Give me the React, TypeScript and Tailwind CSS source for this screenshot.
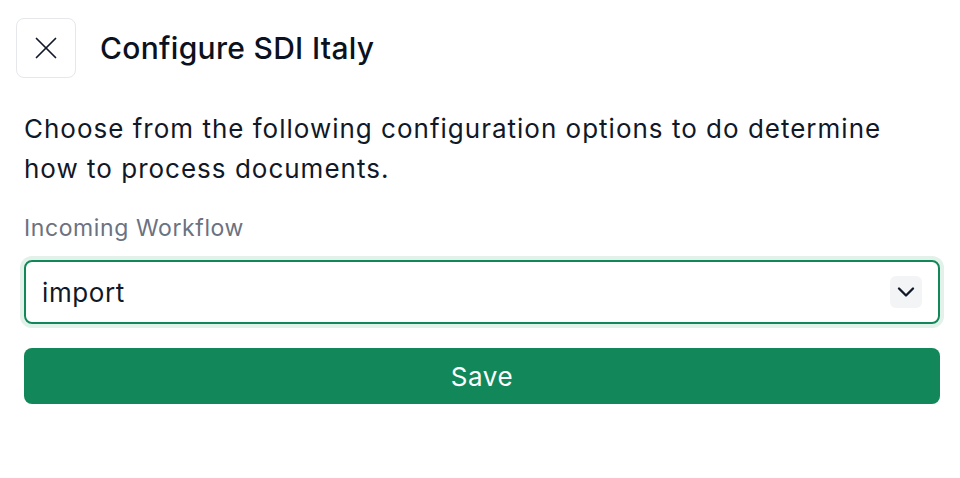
import { X, ChevronDown } from 'lucide-react';

export default function App() {
  return (
    <div className="w-[960px] h-[478px] bg-white font-['Inter',sans-serif] text-[#0f172a]">
      <div className="flex items-center gap-6 pl-4 pt-[18px]">
        <button
          type="button"
          className="flex items-center justify-center w-[60px] h-[60px] rounded-lg border border-[#e5e7eb] bg-white"
        >
          <X className="w-[38px] h-[38px] text-[#111827]" strokeWidth={1.1} />
        </button>
        <h1 className="text-[30px] leading-none font-medium tracking-[0.3px] text-[#0b1120]">Configure SDI Italy</h1>
      </div>

      <div className="pl-6 pr-5 pt-[31px]">
        <p className="text-[26px] leading-[40px] tracking-[1px] text-[#111827]">
          Choose from the following configuration options to do determine how to process documents.
        </p>

        <label className="block mt-[23px] text-[23px] leading-8 tracking-[0.6px] text-[#6b7280]">Incoming Workflow</label>

        <div className="mt-4 flex items-center h-[64px] rounded-lg border-2 border-[#12885a] ring-4 ring-[#e2f1e9] pl-4 pr-4">
          <span className="flex-1 text-[26px] tracking-[0.6px] text-[#111827]">import</span>
          <span className="flex items-center justify-center w-8 h-8 rounded-md bg-[#f3f4f6]">
            <ChevronDown className="w-7 h-7 text-[#111827]" strokeWidth={2} />
          </span>
        </div>

        <button
          type="button"
          className="mt-6 w-full h-[56px] rounded-lg bg-[#12885a] text-white text-[26px] tracking-[0.6px]"
        >
          Save
        </button>
      </div>
    </div>
  );
}
